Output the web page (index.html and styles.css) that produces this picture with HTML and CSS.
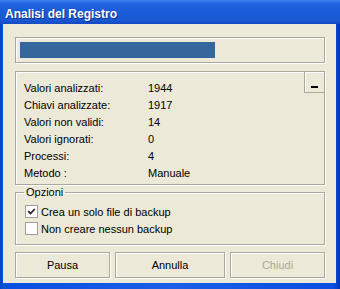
FILE: index.html
```html
<!DOCTYPE html>
<html>
<head>
<meta charset="utf-8">
<link rel="stylesheet" href="styles.css">
</head>
<body>
<div class="window">
  <div class="titlebar"><span class="title">Analisi del Registro</span></div>
  <div class="client">
    <div class="progress-frame">
      <div class="progress-bar" style="width: 65%"></div>
    </div>
    <div class="info-panel">
      <div class="collapse-btn"><span class="dash"></span></div>
      <div class="info-grid">
        <span>Valori analizzati:</span><span>1944</span>
        <span>Chiavi analizzate:</span><span>1917</span>
        <span>Valori non validi:</span><span>14</span>
        <span>Valori ignorati:</span><span>0</span>
        <span>Processi:</span><span>4</span>
        <span>Metodo :</span><span>Manuale</span>
      </div>
    </div>
    <fieldset class="options">
      <legend>Opzioni</legend>
      <label class="check-row"><span class="checkbox checked"><svg width="9" height="9" viewBox="0 0 9 9"><path d="M1.2 4.2 L3.5 6.5 L7.8 2" fill="none" stroke="#222" stroke-width="1.8"/></svg></span>Crea un solo file di backup</label>
      <label class="check-row"><span class="checkbox"></span>Non creare nessun backup</label>
    </fieldset>
    <div class="buttons">
      <button class="btn">Pausa</button>
      <button class="btn">Annulla</button>
      <button class="btn disabled">Chiudi</button>
    </div>
  </div>
</div>
</body>
</html>
```
FILE: styles.css
```css
* { box-sizing: border-box; }
html, body { margin: 0; padding: 0; }
body {
  width: 340px;
  height: 289px;
  overflow: hidden;
  font-family: "Liberation Sans", Arial, sans-serif;
  font-size: 11px;
  color: #000;
}
.window {
  width: 340px;
  height: 289px;
  display: flex;
  flex-direction: column;
  background: linear-gradient(90deg, #0842c8 0, #0a4fe0 3px, #1a5fe6 50%, #0a4fe0 334px, #0634b0 100%);
}
.titlebar {
  height: 24px;
  flex: none;
  display: flex;
  align-items: center;
  padding-left: 5px;
  background: linear-gradient(180deg, #3b82f0 0, #1f62e0 4px, #1b5bd8 12px, #1a58d2 20px, #1449c4 24px);
}
.title {
  color: #fff;
  font-weight: bold;
  font-size: 12px;
  text-shadow: 1px 1px 0 #0c2e8a;
  margin-top: 4px;
}
.client {
  flex: 1;
  margin: 0 4px 6px 3px;
  background: #ece9d8;
  padding: 13px 11px 0 12px;
  display: flex;
  flex-direction: column;
}
.progress-frame {
  height: 26px;
  border: 1px solid #aca899;
  box-shadow: 1px 1px 0 #fff, inset 1px 1px 0 #fff;
  padding: 4px;
}
.progress-bar {
  height: 16px;
  background: #36679c;
}
.info-panel {
  position: relative;
  margin-top: 8px;
  height: 114px;
  border: 1px solid #aca899;
  box-shadow: 1px 1px 0 #fff, inset 1px 1px 0 #fff;
  padding: 7px 8px 0 8px;
}
.collapse-btn {
  position: absolute;
  top: -1px;
  right: -1px;
  width: 21px;
  height: 22px;
  border: 1px solid #aca899;
  box-shadow: inset 1px 1px 0 #fff;
  display: flex;
  align-items: flex-end;
  justify-content: center;
  padding-bottom: 4px;
}
.dash {
  width: 7px;
  height: 2px;
  background: #000;
}
.info-grid {
  display: grid;
  grid-template-columns: 124px 1fr;
  grid-auto-rows: 17px;
  align-items: center;
}
.options {
  margin: 1px 0 0 0;
  padding: 4px 8px 7px 8px;
  border: 1px solid #aca899;
  box-shadow: 1px 1px 0 #fff, inset 1px 1px 0 #fff;
  min-width: 0;
}
.options legend {
  padding: 0 2px;
  line-height: 13px;
}
.check-row {
  display: flex;
  align-items: center;
  height: 17px;
  padding-left: 1px;
}
.checkbox {
  width: 13px;
  height: 13px;
  border: 1px solid #a19f93;
  background: #fff;
  margin-right: 3px;
  display: flex;
  align-items: center;
  justify-content: center;
}
.buttons {
  margin-top: 7px;
  display: grid;
  grid-template-columns: 95px 110px 95px;
  column-gap: 5px;
}
.btn {
  height: 26px;
  font-family: "Liberation Sans", Arial, sans-serif;
  font-size: 11px;
  color: #000;
  background: #ece9d8;
  border: 1px solid #aca899;
  box-shadow: inset 1px 1px 0 #fff, 1px 1px 0 #fff;
  padding: 0;
  margin: 0;
}
.btn.disabled {
  color: #aca899;
}
```
